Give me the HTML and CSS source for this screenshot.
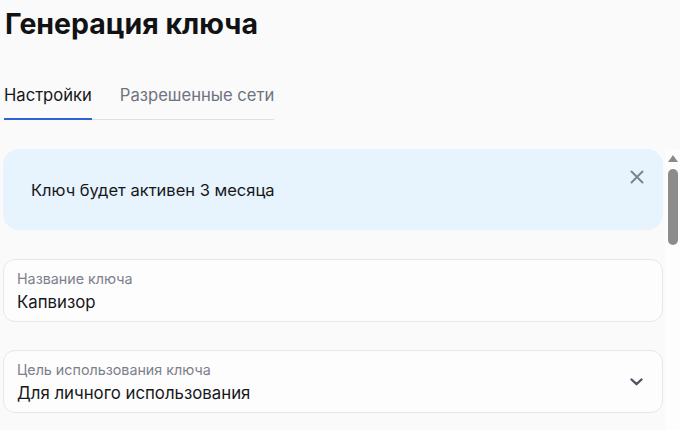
FILE: index.html
```html
<!DOCTYPE html>
<html lang="ru">
<head>
<meta charset="utf-8">
<title>Генерация ключа</title>
<link rel="stylesheet" href="styles.css">
</head>
<body>
<div class="page">
  <header class="head">
    <h1 class="title">Генерация ключа</h1>
    <nav class="tabs">
      <div class="tab tab-active">Настройки</div>
      <div class="tab">Разрешенные сети</div>
    </nav>
  </header>
  <div class="scroll">
    <div class="content">
      <div class="alert">
        <div class="alert-text">Ключ будет активен 3 месяца</div>
        <button class="close" aria-label="Закрыть">
          <svg width="14" height="14" viewBox="0 0 14 14"><path d="M1.5 1.5 L12.5 12.5 M12.5 1.5 L1.5 12.5" stroke="#7d8490" stroke-width="2" stroke-linecap="round" fill="none"/></svg>
        </button>
      </div>
      <div class="field">
        <div class="field-body">
          <div class="label">Название ключа</div>
          <div class="value">Капвизор</div>
        </div>
      </div>
      <div class="field">
        <div class="field-body">
          <div class="label">Цель использования ключа</div>
          <div class="value">Для личного использования</div>
        </div>
        <svg class="chev" width="13" height="8" viewBox="0 0 13 8"><path d="M1.5 1.5 L6.5 6.2 L11.5 1.5" stroke="#4f545e" stroke-width="2.3" stroke-linecap="round" stroke-linejoin="round" fill="none"/></svg>
      </div>
    </div>
    <div class="sbar">
      <div class="sbar-up"></div>
      <div class="sbar-thumb"></div>
    </div>
  </div>
</div>
</body>
</html>
```
FILE: styles.css
```css
html, body {
  margin: 0;
  padding: 0;
  background: #fafafa;
  font-family: "Inter", "Noto Sans", sans-serif;
  color: #16171a;
}
.page {
  width: 680px;
  height: 430px;
  overflow: hidden;
  display: flex;
  flex-direction: column;
}
.head {
  padding-left: 3px;
}
.title {
  margin: 0;
  padding: 7px 0 0 2px;
  font-size: 28.5px;
  line-height: 34px;
  font-weight: 700;
  color: #111214;
}
.tabs {
  margin-top: 42px;
  display: inline-flex;
  gap: 28px;
  border-bottom: 1px solid #dcdee2;
  margin-left: 1px;
}
.tab {
  font-size: 16.6px;
  line-height: 24px;
  padding-bottom: 11px;
  border-bottom: 2px solid transparent;
  margin-bottom: -1px;
  color: #6e7380;
}
.tab-active {
  color: #16171a;
  border-bottom-color: #2d62d8;
}
.scroll {
  margin-top: 29px;
  flex: 1;
  display: flex;
  overflow: hidden;
}
.content {
  flex: 1;
  padding: 0 2px 0 3px;
  display: flex;
  flex-direction: column;
  gap: 28px;
}
.alert {
  height: 81px;
  box-sizing: border-box;
  border-radius: 16px;
  background: #e7f3fd;
  display: flex;
  align-items: center;
  padding: 0 19px 0 28px;
  margin-bottom: 1px;
  flex-shrink: 0;
}
.alert-text {
  flex: 1;
  font-size: 16.5px;
  line-height: 22px;
  color: #16171a;
}
.close {
  align-self: flex-start;
  margin-top: 21px;
  padding: 0;
  border: 0;
  background: none;
  width: 14px;
  height: 14px;
  display: block;
}
.close svg { display: block; }
.field {
  height: 63px;
  box-sizing: border-box;
  border: 1px solid #e7e7e9;
  border-radius: 12px;
  background: #fdfdfd;
  display: flex;
  align-items: center;
  padding: 2px 19px 0 13px;
  flex-shrink: 0;
}
.field-body {
  flex: 1;
  display: flex;
  flex-direction: column;
  gap: 3px;
}
.label {
  font-size: 14.3px;
  line-height: 18px;
  color: #7c808b;
}
.value {
  font-size: 16.8px;
  line-height: 22px;
  color: #16171a;
}
.chev { display: block; margin-top: -2px; }
.sbar {
  width: 15px;
  background: #fdfdfd;
  display: flex;
  flex-direction: column;
  align-items: center;
}
.sbar-up {
  margin-top: 6px;
  width: 0;
  height: 0;
  border-left: 5.5px solid transparent;
  border-right: 5.5px solid transparent;
  border-bottom: 7px solid #8a8a8a;
}
.sbar-thumb {
  margin-top: 7px;
  width: 10px;
  height: 76px;
  border-radius: 5px;
  background: #8c8c8c;
}
```
